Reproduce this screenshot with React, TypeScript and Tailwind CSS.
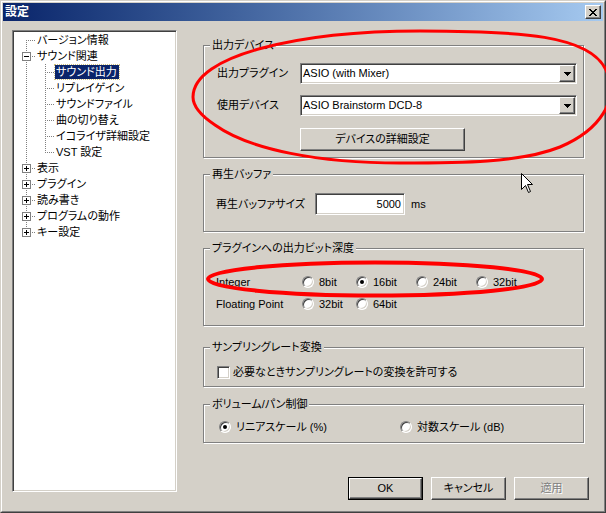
import React from 'react'

const raised =
  'border border-t-white border-l-white border-r-[#404040] border-b-[#404040] shadow-[inset_-1px_-1px_0_#808080]'
const sunken =
  'border border-t-[#808080] border-l-[#808080] border-r-white border-b-white shadow-[inset_1px_1px_0_#404040,inset_-1px_-1px_0_#d4d0c8]'

type TreeRow = {
  label: string
  level: 0 | 1
  box?: 'plus' | 'minus'
  first?: boolean
  last?: boolean
  selected?: boolean
}

const rows: TreeRow[] = [
  { label: 'バージョン情報', level: 0, first: true },
  { label: 'サウンド関連', level: 0, box: 'minus' },
  { label: 'サウンド出力', level: 1, selected: true },
  { label: 'リプレイゲイン', level: 1 },
  { label: 'サウンドファイル', level: 1 },
  { label: '曲の切り替え', level: 1 },
  { label: 'イコライザ詳細設定', level: 1 },
  { label: 'VST 設定', level: 1, last: true },
  { label: '表示', level: 0, box: 'plus' },
  { label: 'プラグイン', level: 0, box: 'plus' },
  { label: '読み書き', level: 0, box: 'plus' },
  { label: 'プログラムの動作', level: 0, box: 'plus' },
  { label: 'キー設定', level: 0, box: 'plus', last: true },
]

function TreeLines({ row }: { row: TreeRow }) {
  const w = row.level === 0 ? 22 : 41
  const dot = { stroke: '#808080', strokeDasharray: '1 1', shapeRendering: 'crispEdges' as const }
  return (
    <svg width={w} height={16} className="shrink-0">
      {row.level === 0 ? (
        <line x1={12.5} y1={row.first ? 8 : 0} x2={12.5} y2={row.last ? 8 : 16} {...dot} />
      ) : (
        <line x1={12.5} y1={0} x2={12.5} y2={16} {...dot} />
      )}
      {row.level === 0 && <line x1={12} y1={8.5} x2={22} y2={8.5} {...dot} />}
      {row.level === 1 && (
        <>
          <line x1={31.5} y1={0} x2={31.5} y2={row.last ? 8 : 16} {...dot} />
          <line x1={31} y1={8.5} x2={41} y2={8.5} {...dot} />
        </>
      )}
      {row.box && (
        <g shapeRendering="crispEdges">
          <rect x={8.5} y={4.5} width={8} height={8} fill="#fff" stroke="#808080" />
          <line x1={10} y1={8.5} x2={15} y2={8.5} stroke="#000" />
          {row.box === 'plus' && <line x1={12.5} y1={6} x2={12.5} y2={11} stroke="#000" />}
        </g>
      )}
    </svg>
  )
}

function Group({ title, className, children }: { title: string; className: string; children?: React.ReactNode }) {
  return (
    <div className={`relative w-[381px] border border-[#808080] shadow-[1px_1px_0_#fff,inset_1px_1px_0_#fff] ${className}`}>
      <span className="absolute -top-[8px] left-[6px] bg-[#d4d0c8] px-[2px] leading-[14px]">{title}</span>
      {children}
    </div>
  )
}

function Combo({ value }: { value: string }) {
  return (
    <div className={`flex h-[21px] w-[277px] bg-white p-[1px] ${sunken}`}>
      <span className="flex flex-1 items-center pl-[1px] text-[11px]">{value}</span>
      <span className={`flex w-[16px] items-center justify-center bg-[#d4d0c8] ${raised}`}>
        <svg width="7" height="4" shapeRendering="crispEdges">
          <polygon points="0,0 7,0 3.5,4" fill="#000" />
        </svg>
      </span>
    </div>
  )
}

function Radio({ checked, label, className = '' }: { checked?: boolean; label: string; className?: string }) {
  return (
    <div className={`flex items-center ${className}`}>
      <span
        className={`flex h-[12px] w-[12px] shrink-0 items-center justify-center rounded-full bg-white ${sunken}`}
      >
        {checked && <span className="h-[4px] w-[4px] rounded-full bg-black" />}
      </span>
      <span className="ml-[5px]">{label}</span>
    </div>
  )
}

function Button({
  label,
  isDefault,
  disabled,
  width = 'w-[75px]',
}: {
  label: string
  isDefault?: boolean
  disabled?: boolean
  width?: string
}) {
  const inner = (
    <div
      className={`flex h-full w-full items-center justify-center bg-[#d4d0c8] ${raised} ${
        disabled ? 'text-[#808080] [text-shadow:1px_1px_0_#fff]' : ''
      }`}
    >
      {label}
    </div>
  )
  return <div className={`h-[23px] ${width} ${isDefault ? 'border border-black' : ''}`}>{inner}</div>
}

export default function App() {
  return (
    <div className="relative h-[513px] w-[606px] overflow-hidden bg-[#d4d0c8] font-['Liberation_Sans','Noto_Sans_CJK_JP',sans-serif] text-[11px] text-black [font-feature-settings:'palt']">
      <div className="h-full w-full border border-t-[#d4d0c8] border-l-[#d4d0c8] border-r-[#404040] border-b-[#404040]">
        <div className="h-full w-full border border-t-white border-l-white border-r-[#808080] border-b-[#808080] p-[1px]">
          {/* title bar */}
          <div className="flex h-[18px] items-center justify-between bg-gradient-to-r from-[#0a246a] to-[#a6caf0] pl-[2px] pr-[2px]">
            <span className="text-[12px] font-bold leading-none text-white">設定</span>
            <div className={`flex h-[14px] w-[16px] items-center justify-center bg-[#d4d0c8] ${raised}`}>
              <svg width="8" height="7" shapeRendering="crispEdges">
                <polygon points="0,0 2,0 4,2.5 6,0 8,0 5,3.5 8,7 6,7 4,4.5 2,7 0,7 3,3.5" fill="#000" />
              </svg>
            </div>
          </div>

          {/* body */}
          <div className="flex h-[489px]">
            {/* tree */}
            <div className={`ml-[9px] mt-[9px] h-[462px] w-[165px] bg-white p-[1px] ${sunken}`}>
              {rows.map((row) => (
                <div key={row.label} className="flex h-[16px] items-center">
                  <TreeLines row={row} />
                  <span
                    className={`flex h-[14px] items-center pl-[1px] pr-[2px] leading-none ${
                      row.selected ? 'bg-[#0a246a] text-white outline outline-1 outline-dotted outline-[#d0c080]' : ''
                    }`}
                  >
                    {row.label}
                  </span>
                </div>
              ))}
            </div>

            {/* right side */}
            <div className="ml-[26px] flex w-[386px] flex-col">
              <Group title="出力デバイス" className="mt-[24px] h-[113px] pl-[13px] pt-[17px]">
                <div className="flex h-[21px] items-center">
                  <span className="w-[83px]">出力プラグイン</span>
                  <Combo value="ASIO (with Mixer)" />
                </div>
                <div className="mt-[11px] flex h-[21px] items-center">
                  <span className="w-[83px]">使用デバイス</span>
                  <Combo value="ASIO Brainstorm DCD-8" />
                </div>
                <div className="ml-[83px] mt-[12px]">
                  <Button label="デバイスの詳細設定" width="w-[165px]" />
                </div>
              </Group>

              <Group title="再生バッファ" className="mt-[16px] h-[58px] pl-[12px] pt-[18px]">
                <div className="flex h-[22px] items-center">
                  <span className="w-[99px]">再生バッファサイズ</span>
                  <div className={`flex h-[22px] w-[90px] items-center justify-end bg-white pr-[3px] ${sunken}`}>
                    5000
                  </div>
                  <span className="ml-[6px]">ms</span>
                </div>
              </Group>

              <Group title="プラグインへの出力ビット深度" className="mt-[16px] h-[78px] pl-[12px] pt-[25px]">
                <div className="flex h-[16px] items-center">
                  <span className="w-[86px]">Integer</span>
                  <Radio label="8bit" className="w-[54px]" />
                  <Radio label="16bit" checked className="w-[60px]" />
                  <Radio label="24bit" className="w-[60px]" />
                  <Radio label="32bit" />
                </div>
                <div className="mt-[6px] flex h-[16px] items-center">
                  <span className="w-[86px]">Floating Point</span>
                  <Radio label="32bit" className="w-[54px]" />
                  <Radio label="64bit" />
                </div>
              </Group>

              <Group title="サンプリングレート変換" className="mt-[21px] h-[40px] pl-[13px] pt-[16px]">
                <div className="flex h-[16px] items-center">
                  <span className={`h-[13px] w-[13px] bg-white ${sunken}`} />
                  <span className="ml-[3px]">必要なときサンプリングレートの変換を許可する</span>
                </div>
              </Group>

              <Group title="ボリューム/パン制御" className="mt-[17px] h-[39px] pl-[15px] pt-[14px]">
                <div className="flex h-[16px] items-center">
                  <div className="flex w-[181px] items-center">
                    <Radio label="リニアスケール (%)" checked />
                  </div>
                  <Radio label="対数スケール (dB)" />
                </div>
              </Group>

              <div className="mt-[34px] flex justify-end gap-[8px]">
                <Button label="OK" isDefault />
                <Button label="キャンセル" />
                <Button label="適用" disabled />
              </div>
            </div>
          </div>
        </div>
      </div>

      {/* red annotations and mouse pointer */}
      <svg className="pointer-events-none absolute left-0 top-0" width="606" height="513">
        <path
          d="M193,97 C193,55 300,31 420,31 C520,31 590,35 606,70 C620,100 600,130 560,147 C520,163 460,163 400,163 C320,163 250,150 215,125 C200,115 193,105 193,97 Z"
          fill="none"
          stroke="#ff0000"
          strokeWidth="3"
        />
        <ellipse cx="375" cy="279" rx="167" ry="16.5" fill="none" stroke="#ff0000" strokeWidth="4" />
        <path
          d="M521.5,173.5 L521.5,189.5 L525.5,185.5 L528.5,192.5 L530.5,191.5 L527.5,184.5 L532.5,184.5 Z"
          fill="#fff"
          stroke="#000"
          strokeWidth="1"
        />
      </svg>
    </div>
  )
}
